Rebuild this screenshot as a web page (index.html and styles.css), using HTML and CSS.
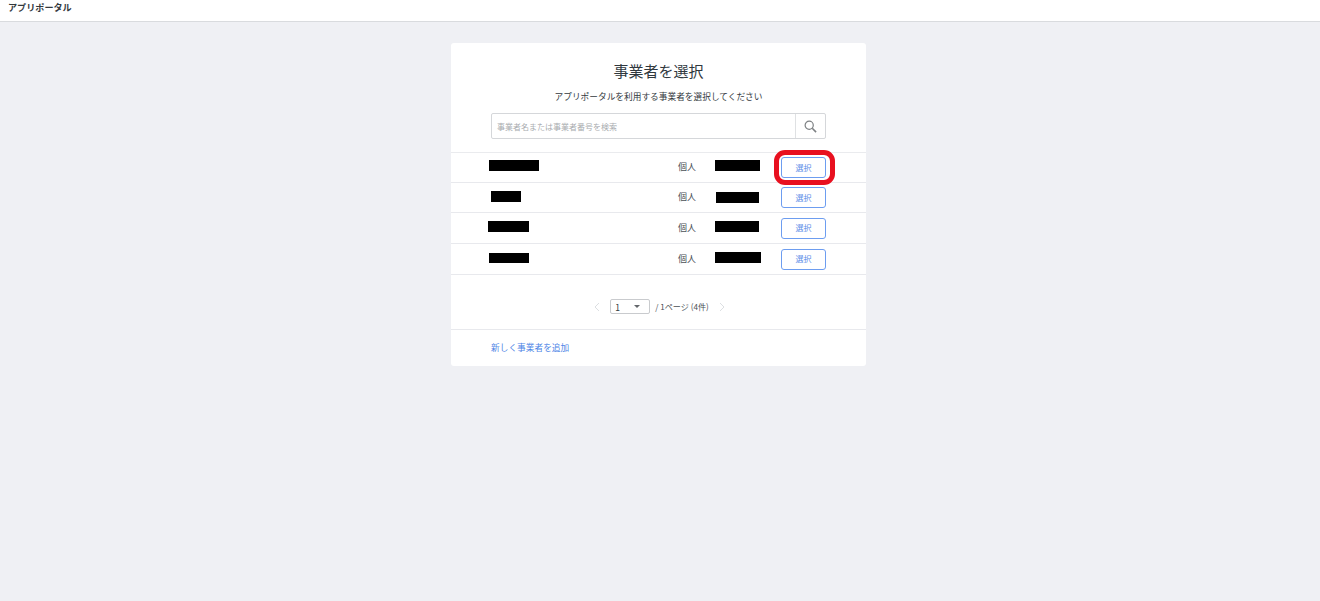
FILE: index.html
```html
<!DOCTYPE html>
<html lang="ja">
<head>
<meta charset="utf-8">
<title>アプリポータル</title>
<link rel="stylesheet" href="styles.css">
</head>
<body>
<header class="topbar">アプリポータル</header>
<main class="page">
  <section class="card">
    <h1 class="title">事業者を選択</h1>
    <p class="lead">アプリポータルを利用する事業者を選択してください</p>
    <div class="search">
      <span class="search-text">事業者名または事業者番号を検索</span>
      <span class="search-btn">
        <svg width="13" height="13" viewBox="0 0 14 14" fill="none" stroke="#7d8083" stroke-width="1.3"><circle cx="5.6" cy="5.6" r="4.4"/><path d="M8.9 8.9 13 13" stroke-width="1.7"/></svg>
      </span>
    </div>
    <div class="list">
      <div class="row">
        <div class="name"><span class="mask m1"></span></div>
        <div class="kind">個人</div>
        <div class="num"><span class="mask n1"></span></div>
        <div class="action"><button class="select">選択</button><span class="highlight"></span></div>
      </div>
      <div class="row">
        <div class="name"><span class="mask m2"></span></div>
        <div class="kind">個人</div>
        <div class="num"><span class="mask n2"></span></div>
        <div class="action"><button class="select">選択</button></div>
      </div>
      <div class="row row-tall">
        <div class="name"><span class="mask m3"></span></div>
        <div class="kind">個人</div>
        <div class="num"><span class="mask n3"></span></div>
        <div class="action"><button class="select">選択</button></div>
      </div>
      <div class="row row-tall">
        <div class="name"><span class="mask m4"></span></div>
        <div class="kind">個人</div>
        <div class="num"><span class="mask n4"></span></div>
        <div class="action"><button class="select">選択</button></div>
      </div>
    </div>
    <div class="pager">
      <svg class="chev" width="6" height="10" viewBox="0 0 6 10" fill="none" stroke="#dcdfe2" stroke-width="1"><path d="M5 1 1 5l4 4"/></svg>
      <div class="page-select"><span>1</span><span class="caret"></span></div>
      <span class="page-info">/ 1ページ (4件)</span>
      <svg class="chev" width="6" height="10" viewBox="0 0 6 10" fill="none" stroke="#dcdfe2" stroke-width="1"><path d="m1 1 4 4-4 4"/></svg>
    </div>
    <div class="foot"><a class="add" href="#">新しく事業者を追加</a></div>
  </section>
</main>
</body>
</html>
```
FILE: styles.css
```css
* { box-sizing: border-box; }
html, body { margin: 0; height: 100%; }
body {
  background: #eff0f4;
  color: #2f3b43;
  font-family: "Noto Sans CJK JP", "Noto Sans", sans-serif;
  overflow: hidden;
}
.topbar {
  height: 22px;
  background: #fff;
  border-bottom: 1px solid #d9dbde;
  padding: 0 8px;
  font-size: 9.1px;
  font-weight: 700;
  line-height: 14px;
  color: #33393e;
}
.page { display: flex; justify-content: center; padding: 21px 3px 0 0; }
.card {
  width: 415px;
  height: 323px;
  background: #fff;
  border-radius: 3px;
  display: flex;
  flex-direction: column;
}
.title {
  margin: 16px 0 0;
  font-size: 15px;
  font-weight: 400;
  line-height: 24px;
  text-align: center;
  color: #30383e;
}
.lead {
  margin: 7px 0 0;
  font-size: 8.7px;
  line-height: 14px;
  text-align: center;
  color: #33393e;
}
.search {
  margin: 9px 40px 0;
  height: 26px;
  border: 1px solid #d5d7da;
  border-radius: 2px;
  display: flex;
  align-items: center;
}
.search-text { flex: 1; padding-left: 5px; font-size: 8px; color: #a9acaf; }
.search-btn {
  width: 30px;
  height: 24px;
  border-left: 1px solid #dfe1e3;
  display: flex;
  align-items: center;
  justify-content: center;
}
.list { margin-top: 13px; border-top: 1px solid #eaebee; }
.row {
  position: relative;
  height: 30px;
  border-bottom: 1px solid #e8e9ed;
  display: flex;
  align-items: center;
}
.row-tall { height: 31px; }
.name { width: 227px; display: flex; }
.kind { width: 37px; margin-top: -2px; font-size: 9px; color: #4a5056; }
.num { width: 66px; display: flex; }
.action { position: relative; display: flex; }
.mask { display: block; background: #000; height: 11px; }
.m1 { width: 50px; margin: -5px 0 0 38px; }
.m2 { width: 30px; margin: -3px 0 0 40px; }
.m3 { width: 41px; margin: -3px 0 0 37px; }
.m4 { width: 40px; margin: -3px 0 0 38px; height: 10px; }
.n1 { width: 45px; margin: -5px 0 0 0; }
.n2 { width: 43px; margin: -1px 0 0 1px; }
.n3 { width: 44px; margin: -3px 0 0 0; }
.n4 { width: 46px; margin: -3px 0 0 0; }
.select {
  width: 45px;
  height: 21px;
  padding: 0;
  background: #fff;
  border: 1px solid #6d9df0;
  border-radius: 3px;
  color: #5f8fe8;
  font-family: inherit;
  font-size: 8px;
  line-height: 18px;
}
.highlight {
  position: absolute;
  left: -7px;
  top: -7px;
  width: 61px;
  height: 35px;
  border: 5px solid #e8101f;
  border-radius: 11px;
  pointer-events: none;
}
.pager {
  height: 55px;
  border-bottom: 1px solid #e8e9ed;
  display: flex;
  align-items: center;
  justify-content: center;
  padding: 9px 0 0 2px;
}
.page-select {
  width: 40px;
  height: 15px;
  margin-left: 10px;
  padding: 0 6px 0 4px;
  border: 1px solid #c9cbce;
  border-radius: 2px;
  display: flex;
  align-items: center;
  justify-content: space-between;
  font-size: 8.5px;
  color: #33393e;
  background: #fff;
}
.caret {
  width: 0;
  height: 0;
  margin-right: 3px;
  border-left: 3.5px solid transparent;
  border-right: 3.5px solid transparent;
  border-top: 3.5px solid #63676b;
}
.page-info { margin: 0 10px 0 5px; font-size: 8.1px; color: #4a5056; }
.foot { padding: 11px 40px 0; }
.add { font-size: 8.7px; line-height: 14px; color: #4f86e6; text-decoration: none; display: block; }
```
